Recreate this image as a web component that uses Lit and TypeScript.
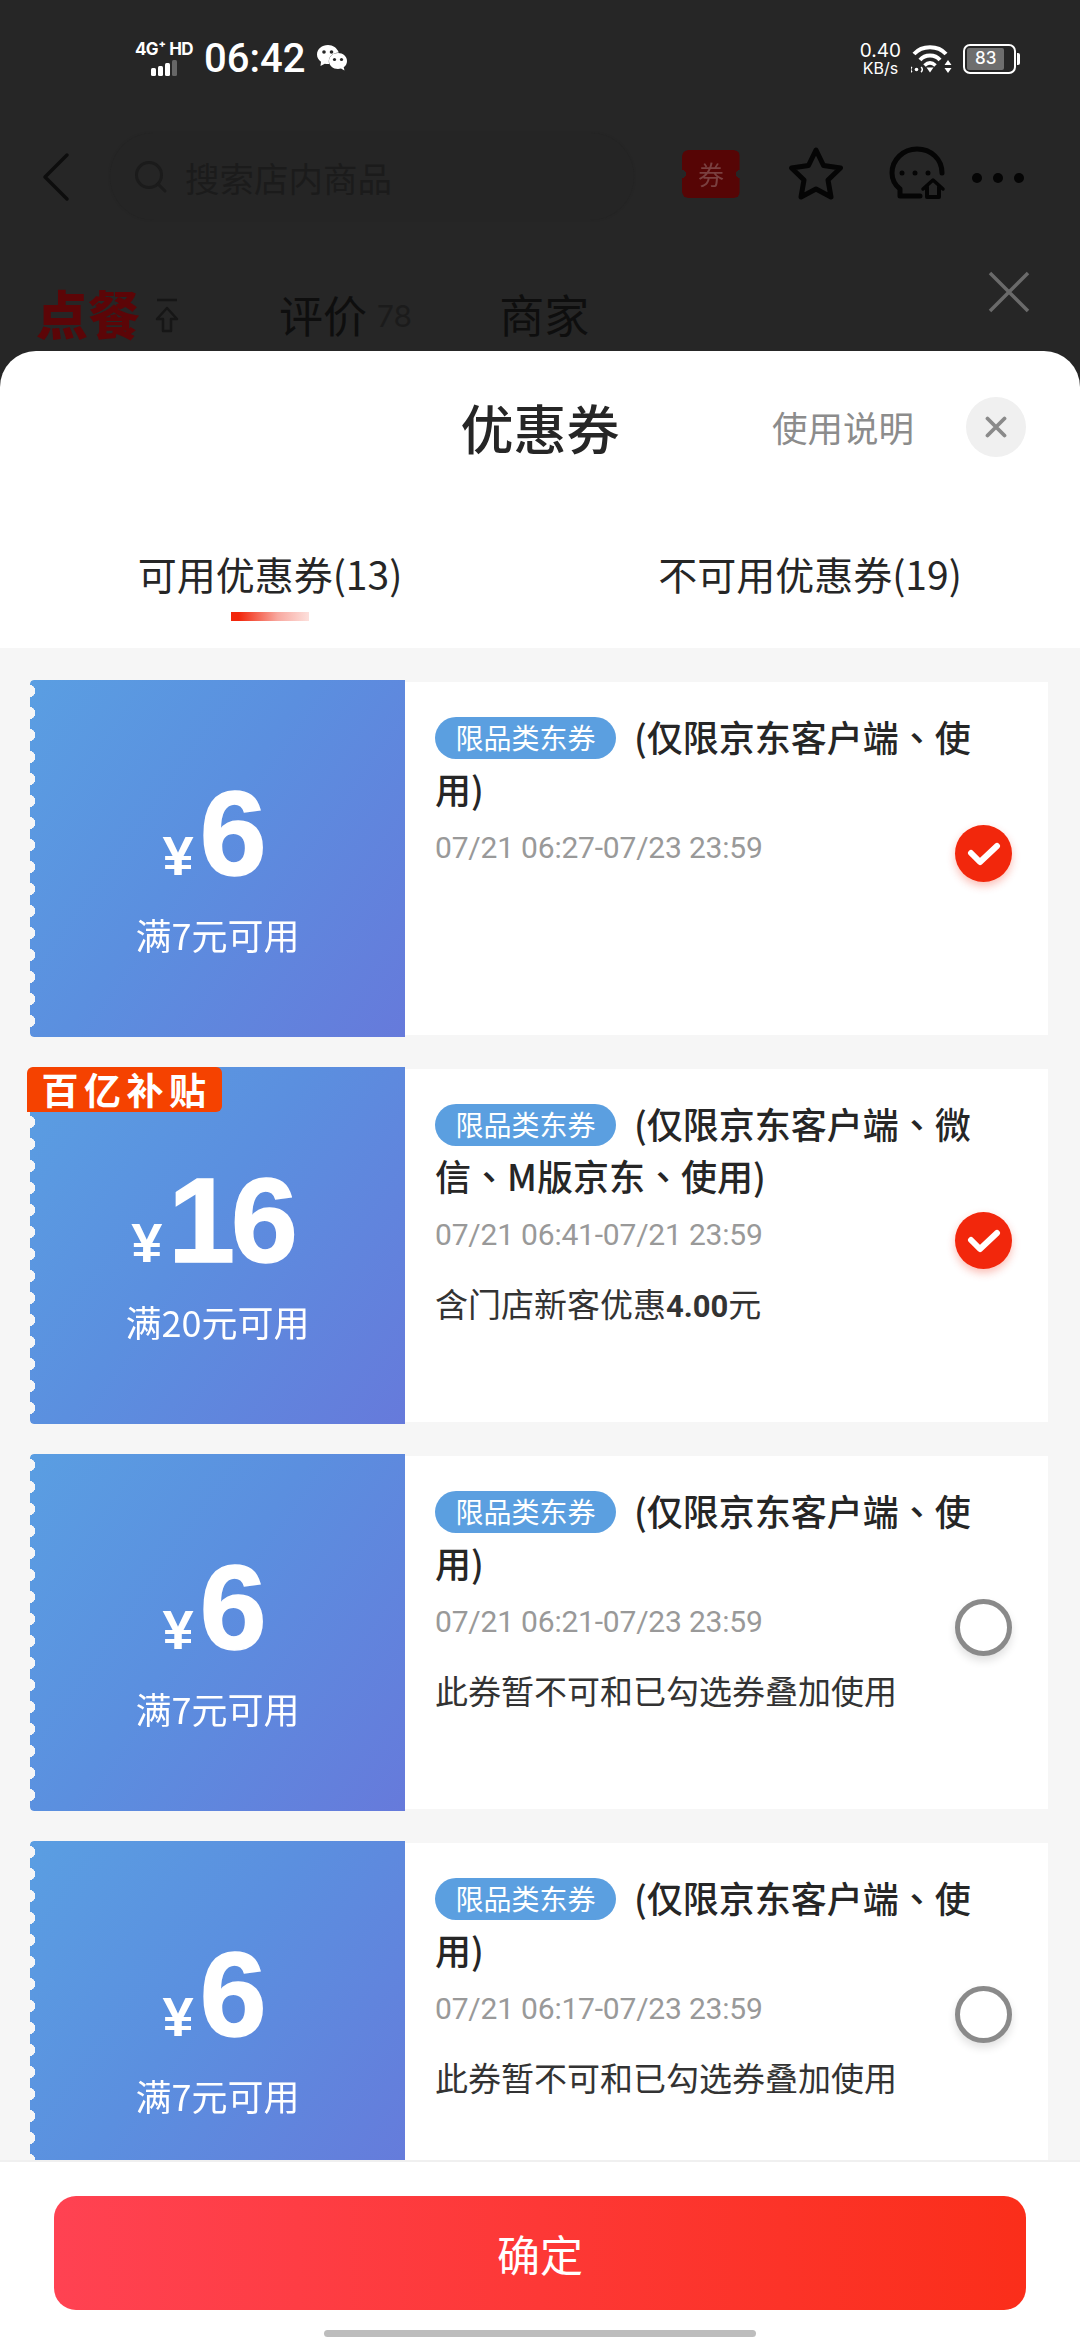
import { LitElement, html, css, svg } from "lit";
import { customElement } from "lit/decorators.js";

interface Coupon {
  amount: string;
  cond: string;
  limit: string;
  date: string;
  checked: boolean;
  note?: unknown;
  subsidy?: boolean;
}

const COUPONS: Coupon[] = [
  { amount: "6", cond: "满7元可用", limit: "(仅限京东客户端、使用)", date: "07/21 06:27-07/23 23:59", checked: true },
  {
    amount: "16", cond: "满20元可用", limit: "(仅限京东客户端、微信、M版京东、使用)", date: "07/21 06:41-07/21 23:59", checked: true,
    note: html`含门店新客优惠<b>4.00</b>元`, subsidy: true,
  },
  { amount: "6", cond: "满7元可用", limit: "(仅限京东客户端、使用)", date: "07/21 06:21-07/23 23:59", checked: false, note: "此券暂不可和已勾选券叠加使用" },
  { amount: "6", cond: "满7元可用", limit: "(仅限京东客户端、使用)", date: "07/21 06:17-07/23 23:59", checked: false, note: "此券暂不可和已勾选券叠加使用" },
];

const wechat = svg`<svg width="32" height="32" viewBox="0 0 32 32" fill="#fff">
  <path d="M12 2C6 2 1 6 1 11.500c0 3 1.500 5.500 4 7.300L4.500 23l4.300-2.300c1 .3 2 .4 3 .4 .6 0 1 0 1.500-.1-.3-1-.5-1.800-.5-2.800 0-5 4.500-8.800 10-8.800C21 5 17 2 12 2z"/>
  <path d="M31 18c0-4.500-4-8-9-8s-9 3.500-9 8 4 8 9 8c1 0 2-.2 3-.4l3.500 2-.8-3.300C30 22.700 31 20.500 31 18z"/>
  <circle cx="8" cy="9" r="1.800" fill="#262626"/><circle cx="15.500" cy="9" r="1.800" fill="#262626"/>
  <circle cx="18.500" cy="16.500" r="1.600" fill="#262626"/><circle cx="25.500" cy="16.500" r="1.600" fill="#262626"/>
</svg>`;

const wifi = svg`<svg width="42" height="32" viewBox="0 0 42 32" fill="none" stroke="#fff" stroke-width="4">
  <path d="M3 11C11 2 27 2 35 11"/>
  <path d="M9 17C14 11 24 11 29 17"/>
  <path d="M13.500 22.500C17 19 21 19 24.500 22.500" stroke-width="3.500"/>
  <path d="M15.500 24.500h7L19 29.500z" fill="#fff" stroke="none"/>
  <path d="M1 24a3 3 0 0 0 0 5M10 24a3 3 0 0 1 0 5" stroke-width="1.500"/>
  <circle cx="5.500" cy="26.500" r="1.800" fill="#fff" stroke="none"/>
  <path d="M37 17l3.500 5h-7zM37 30l3.500-5h-7z" fill="#fff" stroke="none"/>
</svg>`;

const back = svg`<svg width="30" height="50" viewBox="0 0 30 50" fill="none" stroke="#0d0d0d" stroke-width="3.500" stroke-linecap="round" stroke-linejoin="round"><path d="M26 3L4 25l22 22"/></svg>`;

const searchIcon = svg`<svg width="34" height="34" viewBox="0 0 34 34" fill="none" stroke="#1b1b1b" stroke-width="3"><circle cx="15" cy="15" r="12.500"/><path d="M24 24l7 7" stroke-linecap="round"/></svg>`;

const star = svg`<svg width="58" height="58" viewBox="0 0 58 58" fill="none" stroke="#050505" stroke-width="5" stroke-linejoin="round"><path d="M29 4l7.500 15.500 17 2.500-12.500 12 3 17-15-8-15 8 3-17L4.500 22l17-2.500z"/></svg>`;

const chat = svg`<svg width="58" height="58" viewBox="0 0 58 58" fill="none" stroke="#050505" stroke-width="5" stroke-linecap="round" stroke-linejoin="round">
  <path d="M54 28C54 14 43 4 29 4S4 15 4 28c0 7 3 12 8 16v7h20"/>
  <circle cx="14" cy="28" r="2.500" fill="#050505" stroke="none"/><circle cx="27" cy="28" r="2.500" fill="#050505" stroke="none"/><circle cx="40" cy="28" r="2.500" fill="#050505" stroke="none"/>
  <path d="M35 44l10-9 10 9" stroke-width="3.500"/><path d="M39 42v10h12V42" stroke-width="4"/>
</svg>`;

const upIcon = svg`<svg width="24" height="36" viewBox="0 0 24 36" fill="none" stroke="#161616" stroke-width="2.500" stroke-linejoin="round"><path d="M2 2h20"/><path d="M12 10L2 21h6v12h8V21h6z"/></svg>`;

const bigX = svg`<svg width="42" height="42" viewBox="0 0 42 42" stroke="#6a6a6a" stroke-width="3.500"><path d="M2 2l38 38M40 2L2 40"/></svg>`;

const closeX = svg`<svg width="22" height="22" viewBox="0 0 22 22" stroke="#8a8a8a" stroke-width="3.800" stroke-linecap="round"><path d="M2.500 2.500l17 17M19.500 2.500l-17 17"/></svg>`;

const tick = svg`<svg width="34" height="26" viewBox="0 0 34 26" fill="none" stroke="#fff" stroke-width="6" stroke-linecap="round" stroke-linejoin="round"><path d="M4 12l9 9L30 5"/></svg>`;

@customElement("app-root")
export class AppRoot extends LitElement {
  static styles = css`
    :host {
      display: flex;
      flex-direction: column;
      width: 1080px;
      height: 2340px;
      overflow: hidden;
      background: #262626;
      font-family: "Noto Sans CJK SC", "Liberation Sans", sans-serif;
    }
    .status {
      height: 118px;
      flex: none;
      display: flex;
      align-items: center;
      padding: 0 60px 0 136px;
      color: #fff;
    }
    .net { width: 56px; display: flex; flex-direction: column; align-items: center; margin-top: -2px; }
    .net-text { font: 700 17px/18px Inter, sans-serif; white-space: nowrap; letter-spacing: -0.5px; }
    .bars { display: flex; align-items: flex-end; gap: 2px; height: 16px; margin-top: 2px; }
    .bars i { display: block; width: 5px; background: #fff; border-radius: 1.500px; }
    .bars i.b1 { height: 8px; }
    .bars i.b2 { height: 10px; }
    .bars i.b3 { height: 13px; }
    .bars i.b4 { height: 16px; background: #666; }
    .time { font: 500 40px/44px Roboto, sans-serif; margin-left: 12px; width: 112px; }
    .right { margin-left: auto; display: flex; align-items: center; gap: 10px; }
    .speed { text-align: center; font-family: Inter, sans-serif; }
    .speed div:first-child { font-size: 19px; line-height: 18px; }
    .speed div:last-child { font-size: 16px; line-height: 16px; }
    .battery { display: flex; align-items: center; }
    .batt-body {
      width: 53px; height: 30px; box-sizing: border-box;
      border: 2.500px solid #fff; border-radius: 7px; padding: 2px;
      display: flex;
    }
    .batt-fill {
      width: 83%; background: #6e6e6e; border-radius: 2px;
      font: 500 17px/21px Inter, sans-serif; text-align: center;
    }
    .batt-nub { width: 3px; height: 12px; background: #fff; border-radius: 0 2px 2px 0; margin-left: 1px; }

    .nav {
      height: 87px; margin-top: 15px; flex: none;
      display: flex; align-items: center;
      padding-left: 41px;
    }
    .search {
      width: 524px; height: 87px; box-sizing: border-box;
      margin-left: 39px; border-radius: 44px;
      background: #252525;
      box-shadow: 0 0 2px #232323;
      display: flex; align-items: center; gap: 17px; padding-left: 24px;
      color: #1b1b1b; font-size: 34.500px;
    }
    .coupon-ico {
      width: 58px; height: 48px; margin-left: 48px; margin-top: -5px;
      background: #560505; border-radius: 6px;
      display: flex; align-items: center; justify-content: center;
      color: #7a4040; font-size: 26px; line-height: 1;
      -webkit-mask: radial-gradient(circle 4px at 0 50%, transparent 96%, #000) left / 51% 100% no-repeat,
        radial-gradient(circle 4px at 100% 50%, transparent 96%, #000) right / 51% 100% no-repeat;
      mask: radial-gradient(circle 4px at 0 50%, transparent 96%, #000) left / 51% 100% no-repeat,
        radial-gradient(circle 4px at 100% 50%, transparent 96%, #000) right / 51% 100% no-repeat;
    }
    .star { margin-left: 47px; margin-top: -4px; display: flex; }
    .chat { margin-left: 43px; margin-top: -5px; display: flex; }
    .dots { margin-left: 26px; margin-top: 2px; display: flex; gap: 11px; }
    .dots i { display: block; width: 10px; height: 10px; border-radius: 50%; background: #050505; }

    .bgtabs {
      height: 131px; flex: none; box-sizing: border-box;
      display: flex; align-items: center;
      padding: 60px 50px 0 36px;
      color: #0e0e0e;
    }
    .t-active { font-size: 52px; font-weight: 900; color: #5c0507; line-height: 60px; margin-top: -6px; }
    .t-up { margin-left: 15px; display: flex; }
    .t-a { font-size: 44px; line-height: 60px; margin-left: 100px; margin-top: -4px; }
    .t-num { font: 400 30px/60px Inter, sans-serif; color: #1b1b1b; margin-left: 10px; }
    .t-b { font-size: 45px; line-height: 60px; margin-left: 87px; margin-top: -4px; }
    .t-x { margin-left: auto; margin-top: -48px; display: flex; }

    .sheet {
      flex: 1; min-height: 0;
      background: #fff;
      border-radius: 36px 36px 0 0;
      display: flex; flex-direction: column;
    }
    .head {
      height: 154px; flex: none; box-sizing: border-box; padding-bottom: 3px;
      display: grid; grid-template-columns: 1fr auto 1fr; align-items: center;
    }
    .title { grid-column: 2; font-size: 53px; font-weight: 500; color: #262626; line-height: 64px; }
    .actions { display: flex; align-items: center; justify-content: flex-end; gap: 52px; padding-right: 54px; }
    .help { font-size: 35.500px; color: #8c8c8c; line-height: 48px; }
    .close {
      width: 60px; height: 60px; border-radius: 50%; background: #f0f0f0;
      display: flex; align-items: center; justify-content: center;
    }
    .tabs { height: 143px; flex: none; display: grid; grid-template-columns: 1fr 1fr; padding-top: 42px; box-sizing: border-box; }
    .tab { display: flex; flex-direction: column; align-items: center; font-size: 39px; line-height: 52px; color: #262626; }
    .ind { width: 78px; height: 9px; margin-top: 13px; background: linear-gradient(90deg, #f2270c 10%, #f8a9a0 60%, #fde0dc); }

    .list {
      flex: 1; min-height: 0; overflow: hidden;
      background: #f6f6f6;
      padding: 32px 32px 0 30px;
      display: flex; flex-direction: column; gap: 30px;
    }
    .card { position: relative; display: flex; height: 357px; flex: none; }
    .left {
      width: 375px; flex: none; box-sizing: border-box;
      background: linear-gradient(125deg, #5a9ee2 0%, #5b8fdf 45%, #667adb 100%);
      color: #fff;
      display: flex; flex-direction: column; align-items: center;
      padding-top: 94px;
      border-radius: 4px 0 0 4px;
      -webkit-mask: radial-gradient(circle 6.500px at -1px 11px, transparent 95%, #000) 0 0 / 100% 22px repeat-y;
      mask: radial-gradient(circle 6.500px at -1px 11px, transparent 95%, #000) 0 0 / 100% 22px repeat-y;
    }
    .amount { display: flex; align-items: baseline; line-height: 118px; height: 118px; font-family: "Liberation Sans", sans-serif; font-weight: 700; padding-right: 10px; }
    .yen { font-size: 56px; margin-right: 6px; }
    .num { font-size: 120px; letter-spacing: -4px; -webkit-text-stroke: 1.500px #fff; }
    .cond { font-size: 36px; line-height: 46px; margin-top: 19px; }
    .subsidy {
      position: absolute; left: -3px; top: 0;
      width: 195px; height: 45px; box-sizing: border-box;
      background: #f54200; color: #fff;
      border-radius: 6px 6px 6px 0;
      font-size: 37px; font-weight: 700; line-height: 45px; text-align: center; letter-spacing: 5.500px; padding-left: 4px;
    }
    .body {
      flex: 1; position: relative;
      margin: 2px 0; background: #fff;
      padding: 28px 63px 0 30px;
    }
    .limit { font-family: "Noto Sans CJK TC", sans-serif; font-size: 36px; line-height: 52px; font-weight: 500; color: #262626; }
    .tag {
      display: inline-block; vertical-align: 3px;
      width: 181px; height: 42px;
      border-radius: 21px; background: #5b9fe0; color: #fff;
      font-family: "Noto Sans CJK SC", sans-serif;
      font-size: 28px; font-weight: 400; line-height: 41px; text-align: center;
      margin-right: 18px;
    }
    .date { font: 400 30px/40px Roboto, sans-serif; color: #999; margin-top: 14px; white-space: nowrap; letter-spacing: -0.2px; }
    .note { font-size: 33px; line-height: 46px; color: #333; margin-top: 25px; white-space: nowrap; }
    .note b { font-family: Roboto, sans-serif; font-weight: 700; font-size: 31px; }
    .check {
      position: absolute; right: 36px; top: 143px;
      width: 57px; height: 57px; box-sizing: border-box; border-radius: 50%;
      display: flex; align-items: center; justify-content: center;
    }
    .check.on { background: #f2270c; box-shadow: 0 4px 8px rgba(242, 39, 12, 0.3); }
    .check.off { border: 5px solid #8a8a8a; background: #fff; box-shadow: 0 5px 8px rgba(0, 0, 0, 0.12); }

    .footer {
      flex: none; height: 180px; box-sizing: border-box;
      background: #fff; border-top: 2px solid #f0f0f0;
      padding: 34px 54px 0;
      display: flex; flex-direction: column; align-items: center;
    }
    .confirm {
      width: 972px; height: 114px; flex: none;
      border-radius: 22px;
      background: linear-gradient(90deg, #ff4252 0%, #fb2e1a 100%);
      color: #fff; font-size: 43px; line-height: 114px; text-align: center;
    }
    .home { width: 432px; height: 7px; margin-top: 20px; background: #bdbdbd; border-radius: 4px; }
  `;

  private renderCoupon(c: Coupon) {
    return html`
      <div class="card">
        <div class="left">
          <div class="amount"><span class="yen">¥</span><span class="num">${c.amount}</span></div>
          <div class="cond">${c.cond}</div>
        </div>
        <div class="body">
          <div class="limit"><span class="tag">限品类东券</span>${c.limit}</div>
          <div class="date">${c.date}</div>
          ${c.note ? html`<div class="note">${c.note}</div>` : null}
          <div class="check ${c.checked ? "on" : "off"}">${c.checked ? tick : null}</div>
        </div>
        ${c.subsidy ? html`<div class="subsidy">百亿补贴</div>` : null}
      </div>
    `;
  }

  render() {
    return html`
      <div class="status">
        <div class="net">
          <div class="net-text">4G⁺ HD</div>
          <div class="bars"><i class="b1"></i><i class="b2"></i><i class="b3"></i><i class="b4"></i></div>
        </div>
        <div class="time">06:42</div>
        ${wechat}
        <div class="right">
          <div class="speed"><div>0.40</div><div>KB/s</div></div>
          ${wifi}
          <div class="battery">
            <div class="batt-body"><div class="batt-fill">83</div></div>
            <div class="batt-nub"></div>
          </div>
        </div>
      </div>

      <div class="nav">
        ${back}
        <div class="search">${searchIcon}<span>搜索店内商品</span></div>
        <div class="coupon-ico">券</div>
        <div class="star">${star}</div>
        <div class="chat">${chat}</div>
        <div class="dots"><i></i><i></i><i></i></div>
      </div>

      <div class="bgtabs">
        <span class="t-active">点餐</span>
        <span class="t-up">${upIcon}</span>
        <span class="t-a">评价</span>
        <span class="t-num">78</span>
        <span class="t-b">商家</span>
        <span class="t-x">${bigX}</span>
      </div>

      <div class="sheet">
        <div class="head">
          <div class="title">优惠券</div>
          <div class="actions">
            <span class="help">使用说明</span>
            <span class="close">${closeX}</span>
          </div>
        </div>
        <div class="tabs">
          <div class="tab"><span>可用优惠券(13)</span><div class="ind"></div></div>
          <div class="tab"><span>不可用优惠券(19)</span></div>
        </div>
        <div class="list">${COUPONS.map((c) => this.renderCoupon(c))}</div>
        <div class="footer">
          <div class="confirm">确定</div>
          <div class="home"></div>
        </div>
      </div>
    `;
  }
}
